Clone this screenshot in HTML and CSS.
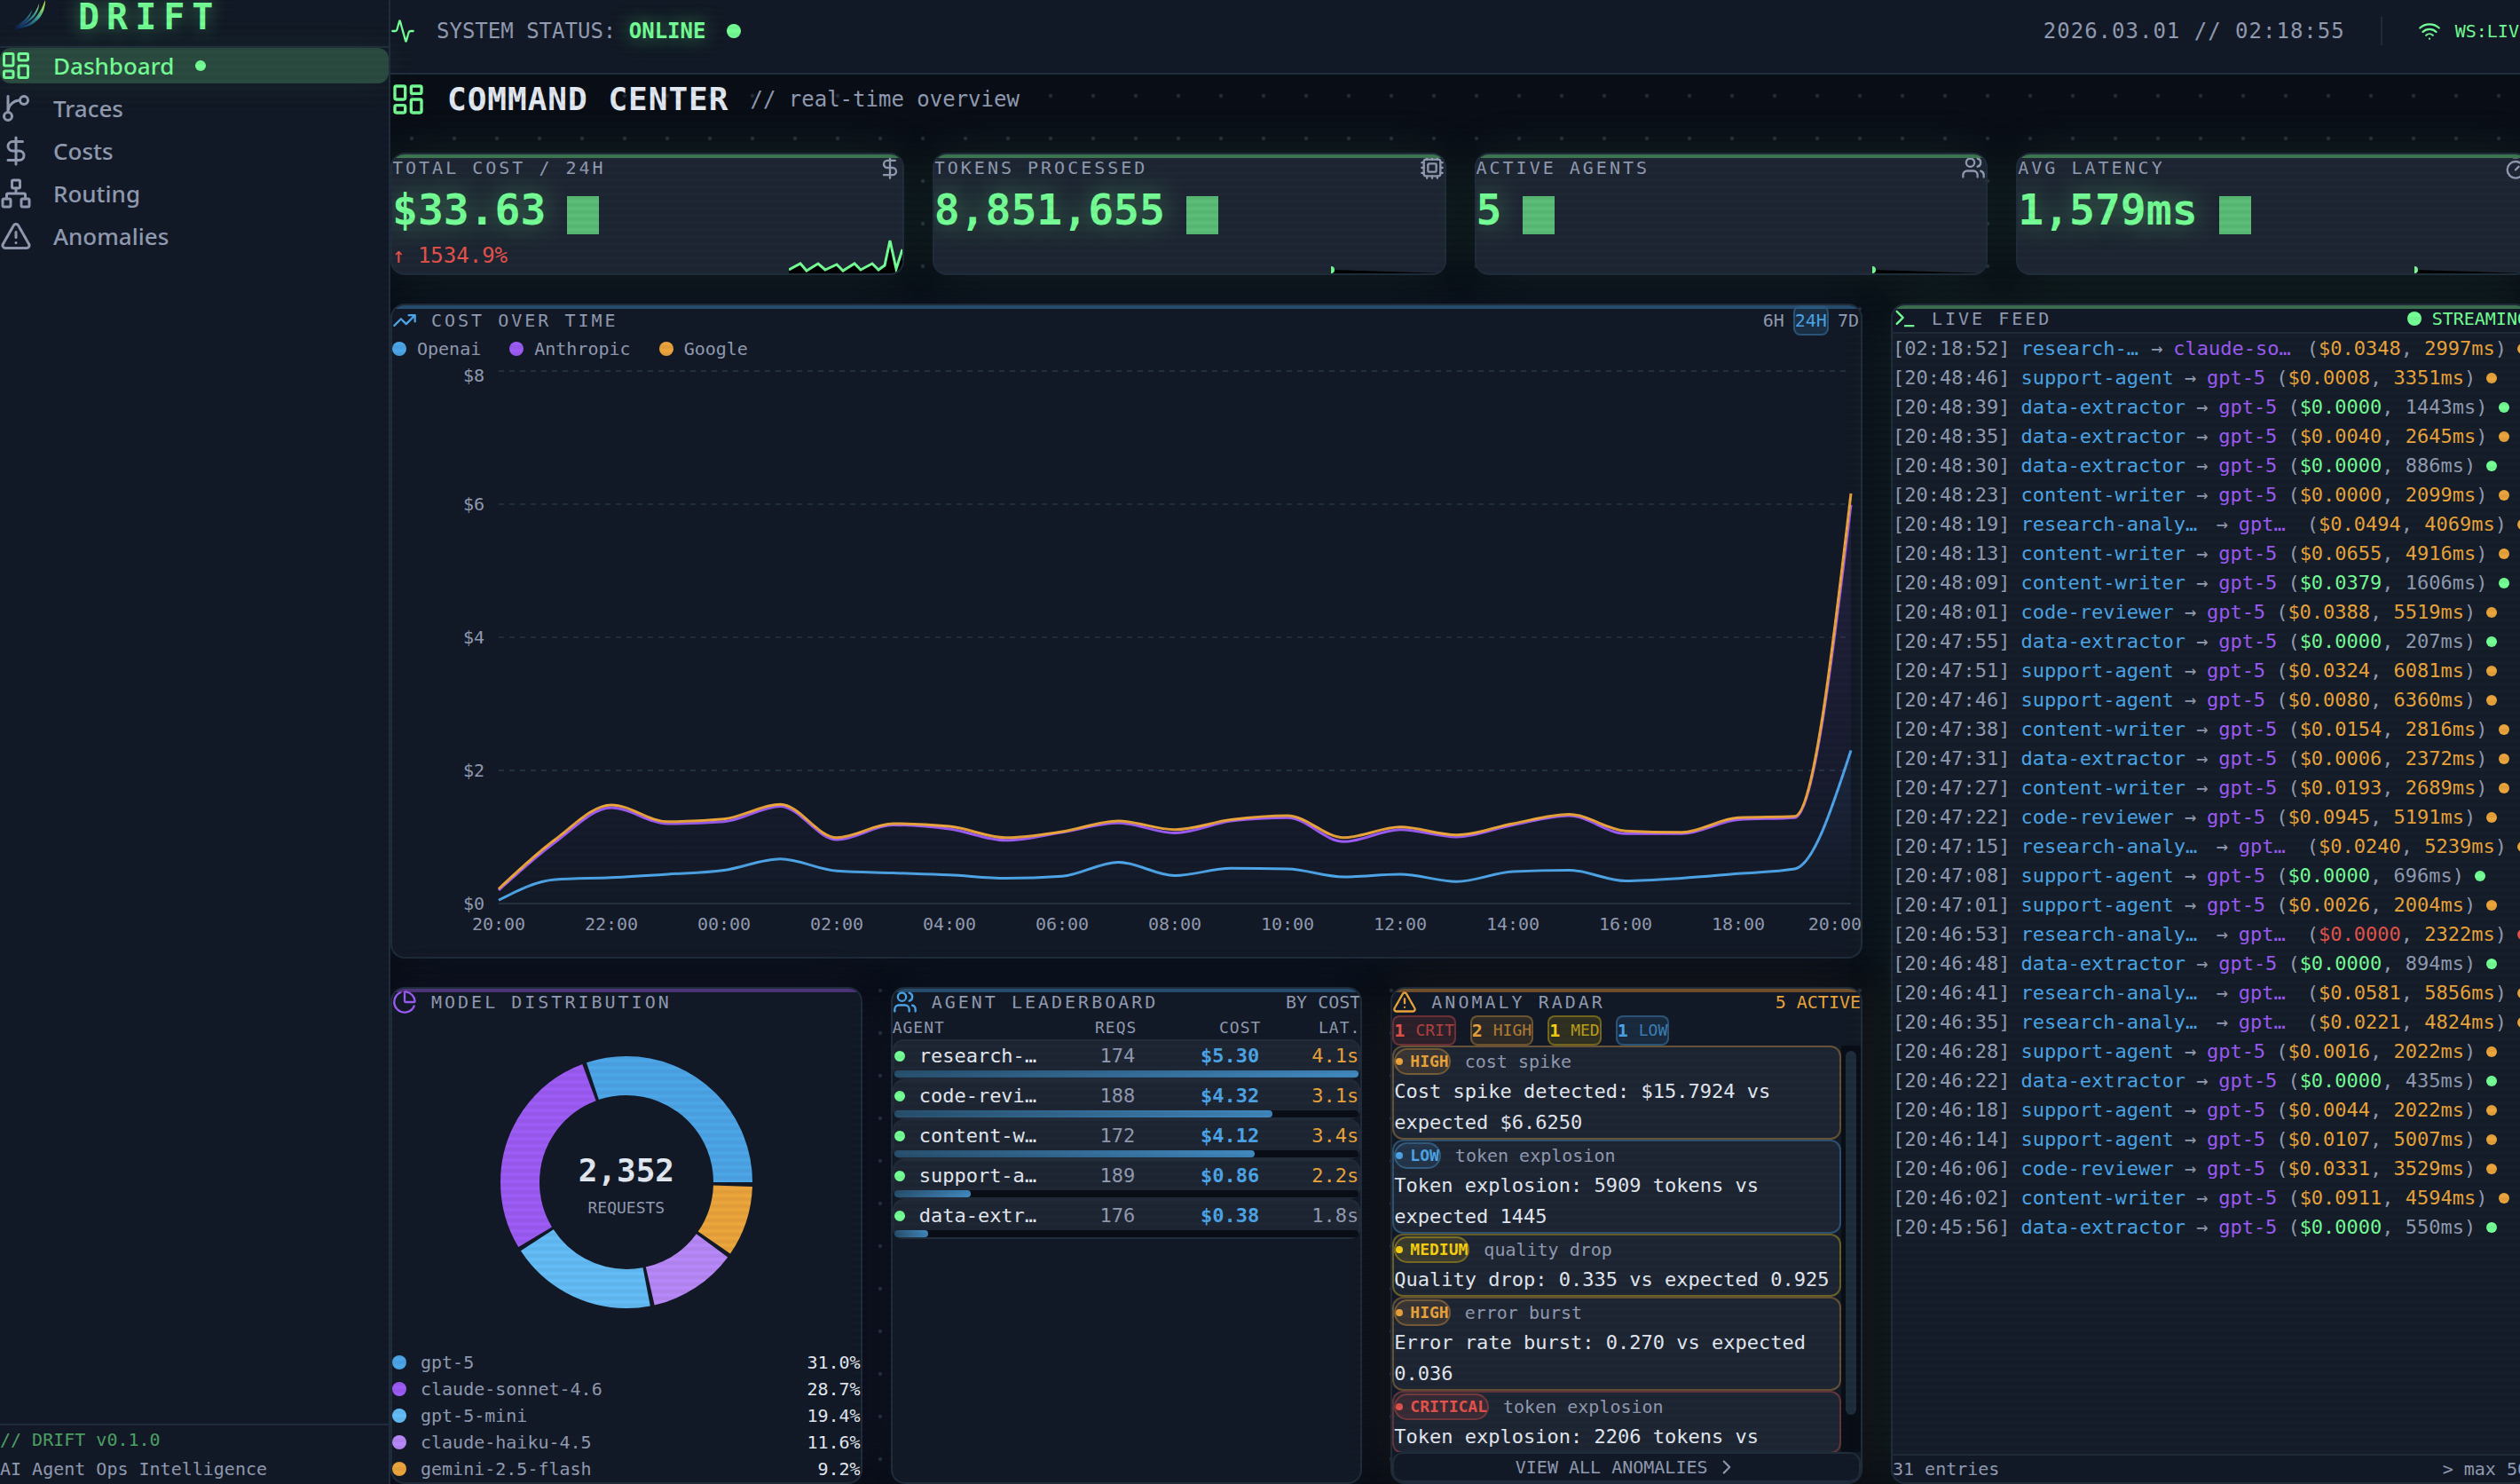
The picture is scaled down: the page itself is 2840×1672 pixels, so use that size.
FILE: index.html
```html
<!DOCTYPE html>
<html lang="en">
<head>
  <meta charset="utf-8">
  <title>DRIFT - Command Center</title>
  <link rel="stylesheet" href="styles.css">
</head>
<body>
  <!-- icon set -->
  <svg class="sprite" aria-hidden="true">
    <symbol id="i-dashboard" viewBox="0 0 24 24"><rect x="3" y="3" width="7" height="9" rx="1"/><rect x="14" y="3" width="7" height="5" rx="1"/><rect x="14" y="12" width="7" height="9" rx="1"/><rect x="3" y="16" width="7" height="5" rx="1"/></symbol>
    <symbol id="i-branch" viewBox="0 0 24 24"><path d="M15 6a9 9 0 0 0-9 9V3"/><circle cx="18" cy="6" r="3"/><circle cx="6" cy="18" r="3"/></symbol>
    <symbol id="i-dollar" viewBox="0 0 24 24"><path d="M12 2v20M17 5H9.5a3.5 3.5 0 0 0 0 7h5a3.5 3.5 0 0 1 0 7H6"/></symbol>
    <symbol id="i-network" viewBox="0 0 24 24"><rect x="16" y="16" width="6" height="6" rx="1"/><rect x="2" y="16" width="6" height="6" rx="1"/><rect x="9" y="2" width="6" height="6" rx="1"/><path d="M5 16v-3a1 1 0 0 1 1-1h12a1 1 0 0 1 1 1v3M12 12V8"/></symbol>
    <symbol id="i-alert" viewBox="0 0 24 24"><path d="m21.73 18-8-14a2 2 0 0 0-3.48 0l-8 14A2 2 0 0 0 4 21h16a2 2 0 0 0 1.73-3M12 9v4M12 17h.01"/></symbol>
    <symbol id="i-activity" viewBox="0 0 24 24"><path d="M22 12h-2.48a2 2 0 0 0-1.93 1.46l-2.35 8.36a.25.25 0 0 1-.48 0L9.24 2.18a.25.25 0 0 0-.48 0l-2.35 8.36A2 2 0 0 1 4.49 12H2"/></symbol>
    <symbol id="i-wifi" viewBox="0 0 24 24"><path d="M12 20h.01M2 8.82a15 15 0 0 1 20 0M5 12.859a10 10 0 0 1 14 0M8.5 16.429a5 5 0 0 1 7 0"/></symbol>
    <symbol id="i-cpu" viewBox="0 0 24 24"><rect x="4" y="4" width="16" height="16" rx="2"/><rect x="8" y="8" width="8" height="8" rx="1"/><path d="M12 20v2M12 2v2M17 20v2M17 2v2M7 20v2M7 2v2M2 12h2M2 17h2M2 7h2M20 12h2M20 17h2M20 7h2"/></symbol>
    <symbol id="i-users" viewBox="0 0 24 24"><path d="M16 21v-2a4 4 0 0 0-4-4H6a4 4 0 0 0-4 4v2M22 21v-2a4 4 0 0 0-3-3.87M16 3.13a4 4 0 0 1 0 7.75"/><circle cx="9" cy="7" r="4"/></symbol>
    <symbol id="i-timer" viewBox="0 0 24 24"><path d="M10 2h4M12 14l3-3"/><circle cx="12" cy="14" r="8"/></symbol>
    <symbol id="i-trend" viewBox="0 0 24 24"><path d="M16 7h6v6M22 7l-8.5 8.5-5-5L2 17"/></symbol>
    <symbol id="i-pie" viewBox="0 0 24 24"><path d="M21 12c.552 0 1.005-.449.95-.998a10 10 0 0 0-8.953-8.951c-.55-.055-.998.398-.998.95v8a1 1 0 0 0 1 1zM21.21 15.89A10 10 0 1 1 8 2.83"/></symbol>
    <symbol id="i-terminal" viewBox="0 0 24 24"><path d="M12 19h8M4 17l6-6-6-6"/></symbol>
    <symbol id="i-chevron" viewBox="0 0 24 24"><path d="m9 18 6-6-6-6"/></symbol>
  </svg>

  <div class="app">
    <aside class="sidebar">
      <div class="brand">
        <svg class="brand-logo" viewBox="0 0 64 38" aria-hidden="true">
          <defs>
            <linearGradient id="feather" gradientUnits="userSpaceOnUse" x1="14" y1="34" x2="50" y2="2">
              <stop offset="0" stop-color="#0c1640"/>
              <stop offset=".35" stop-color="#1c4a7c"/>
              <stop offset=".65" stop-color="#3fa596"/>
              <stop offset="1" stop-color="#c8f542"/>
            </linearGradient>
          </defs>
          <g fill="url(#feather)">
            <path d="M51 0C51 16 42 28 26 30C38 25 46 14 51 0Z"/>
            <path d="M44 4C44 16 34 27 18 31C32 24 40 16 44 4Z"/>
            <path d="M36 11C35 20 27 28 14 32C25 25 32 20 36 11Z"/>
            <path d="M14 35C20 27 28 30 40 24C32 33 22 30 14 35Z"/>
          </g>
        </svg>
        <span class="brand-name">DRIFT</span>
      </div>
      <nav class="nav">
        <a class="nav-item active" href="#"><svg class="icon icon-lg"><use href="#i-dashboard"/></svg><span>Dashboard</span><i class="nav-dot"></i></a>
        <a class="nav-item" href="#"><svg class="icon icon-lg"><use href="#i-branch"/></svg><span>Traces</span></a>
        <a class="nav-item" href="#"><svg class="icon icon-lg"><use href="#i-dollar"/></svg><span>Costs</span></a>
        <a class="nav-item" href="#"><svg class="icon icon-lg"><use href="#i-network"/></svg><span>Routing</span></a>
        <a class="nav-item" href="#"><svg class="icon icon-lg"><use href="#i-alert"/></svg><span>Anomalies</span></a>
      </nav>
      <div class="sidebar-footer">
        <div class="version">// DRIFT v0.1.0</div>
        <div>AI Agent Ops Intelligence</div>
      </div>
    </aside>

    <div class="main">
      <header class="topbar">
        <div class="status">
          <svg class="icon green"><use href="#i-activity"/></svg>
          <span>SYSTEM STATUS: <b class="online">ONLINE</b></span>
          <i class="dot green"></i>
        </div>
        <div class="topbar-right">
          <span class="clock">2026.03.01 // 02:18:55</span>
          <i class="divider"></i>
          <span class="ws"><svg class="icon icon-sm"><use href="#i-wifi"/></svg>WS:LIVE</span>
        </div>
      </header>

      <main class="content">
        <div class="page-title">
          <svg class="icon icon-xl green"><use href="#i-dashboard"/></svg>
          <h1>COMMAND CENTER</h1>
          <span>// real-time overview</span>
        </div>

        <section class="kpis">
          <div class="card">
            <div class="card-head"><span>TOTAL COST / 24H</span><svg class="icon"><use href="#i-dollar"/></svg></div>
            <div class="card-value"><span>$33.63</span><i class="cursor"></i></div>
            <div class="card-delta">↑ 1534.9%</div>
            <svg class="spark" viewBox="0 0 128 40">
              <path d="M0 36L13 29 20 37 33 29 41 36 54 30 61 37 74 29 81 36 94 29 101 36 108 31 114 3 121 35 128 13V40H0Z"/>
              <polyline points="0,36 13,29 20,37 33,29 41,36 54,30 61,37 74,29 81,36 94,29 101,36 108,31 114,3 121,35 128,13"/>
            </svg>
          </div>
          <div class="card">
            <div class="card-head"><span>TOKENS PROCESSED</span><svg class="icon"><use href="#i-cpu"/></svg></div>
            <div class="card-value"><span>8,851,655</span><i class="cursor"></i></div>
            <svg class="spark" viewBox="0 0 128 40"><path d="M0 36L128 40H0Z"/><circle cx="0" cy="36" r="4"/></svg>
          </div>
          <div class="card">
            <div class="card-head"><span>ACTIVE AGENTS</span><svg class="icon"><use href="#i-users"/></svg></div>
            <div class="card-value"><span>5</span><i class="cursor"></i></div>
            <svg class="spark" viewBox="0 0 128 40"><path d="M0 36L128 40H0Z"/><circle cx="0" cy="36" r="4"/></svg>
          </div>
          <div class="card">
            <div class="card-head"><span>AVG LATENCY</span><svg class="icon"><use href="#i-timer"/></svg></div>
            <div class="card-value"><span>1,579ms</span><i class="cursor"></i></div>
            <svg class="spark" viewBox="0 0 128 40"><path d="M0 36L128 40H0Z"/><circle cx="0" cy="36" r="4"/></svg>
          </div>
        </section>

        <div class="board">
          <div class="left">
            <section class="panel panel-blue chart-panel">
              <div class="panel-head">
                <svg class="icon blue"><use href="#i-trend"/></svg>
                <h2>COST OVER TIME</h2>
                <div class="ranges">
                  <button>6H</button>
                  <button class="on">24H</button>
                  <button>7D</button>
                </div>
              </div>
              <div class="legend">
                <span><i class="dot blue"></i>Openai</span>
                <span><i class="dot purple"></i>Anthropic</span>
                <span><i class="dot orange"></i>Google</span>
              </div>
              <svg class="chart" id="chart" viewBox="0 0 1655 670" preserveAspectRatio="xMinYMin meet">
                <defs>
                  <linearGradient id="fill-purple" x1="0" y1="0" x2="0" y2="1"><stop offset="0" stop-color="#9d5cf5" stop-opacity=".12"/><stop offset="1" stop-color="#9d5cf5" stop-opacity="0"/></linearGradient>
                  <linearGradient id="fill-blue" x1="0" y1="0" x2="0" y2="1"><stop offset="0" stop-color="#4da6e8" stop-opacity=".08"/><stop offset="1" stop-color="#4da6e8" stop-opacity="0"/></linearGradient>
                </defs>
              </svg>
            </section>

            <div class="trio">
              <section class="panel panel-purple">
                <div class="panel-head">
                  <svg class="icon purple"><use href="#i-pie"/></svg>
                  <h2>MODEL DISTRIBUTION</h2>
                </div>
                <div class="donut">
                  <svg viewBox="-143 -143 286 286">
                    <g fill="none" stroke-width="44" transform="scale(1,-1)">
                      <circle r="120" pathLength="360" stroke="#4da6e8" stroke-dasharray="108.5 251.5"/>
                      <circle r="120" pathLength="360" stroke="#9d5cf5" stroke-dasharray="100.5 259.5" stroke-dashoffset="-110.5"/>
                      <circle r="120" pathLength="360" stroke="#64bdf7" stroke-dasharray="67.9 292.1" stroke-dashoffset="-213"/>
                      <circle r="120" pathLength="360" stroke="#b888f8" stroke-dasharray="40.6 319.4" stroke-dashoffset="-282.9"/>
                      <circle r="120" pathLength="360" stroke="#eba53c" stroke-dasharray="32.5 327.5" stroke-dashoffset="-325.5"/>
                    </g>
                  </svg>
                  <div class="donut-label"><strong>2,352</strong><span>REQUESTS</span></div>
                </div>
                <ul class="models">
                  <li><i class="dot blue"></i>gpt-5<b>31.0%</b></li>
                  <li><i class="dot purple"></i>claude-sonnet-4.6<b>28.7%</b></li>
                  <li><i class="dot sky"></i>gpt-5-mini<b>19.4%</b></li>
                  <li><i class="dot lilac"></i>claude-haiku-4.5<b>11.6%</b></li>
                  <li><i class="dot orange"></i>gemini-2.5-flash<b>9.2%</b></li>
                </ul>
              </section>

              <section class="panel panel-blue">
                <div class="panel-head">
                  <svg class="icon blue"><use href="#i-users"/></svg>
                  <h2>AGENT LEADERBOARD</h2>
                  <span class="head-note">BY COST</span>
                </div>
                <table class="agents">
                  <thead><tr><th>AGENT</th><th>REQS</th><th>COST</th><th>LAT.</th></tr></thead>
                  <tbody>
                    <tr><td><i class="dot green"></i><span>research-analyst</span></td><td>174</td><td>$5.30</td><td class="warn">4.1s</td><td class="bar"><i style="width:100%"></i></td></tr>
                    <tr><td><i class="dot green"></i><span>code-reviewer</span></td><td>188</td><td>$4.32</td><td class="warn">3.1s</td><td class="bar"><i style="width:81.4%"></i></td></tr>
                    <tr><td><i class="dot green"></i><span>content-writer</span></td><td>172</td><td>$4.12</td><td class="warn">3.4s</td><td class="bar"><i style="width:77.6%"></i></td></tr>
                    <tr><td><i class="dot green"></i><span>support-agent</span></td><td>189</td><td>$0.86</td><td class="warn">2.2s</td><td class="bar"><i style="width:16.4%"></i></td></tr>
                    <tr><td><i class="dot green"></i><span>data-extractor</span></td><td>176</td><td>$0.38</td><td>1.8s</td><td class="bar"><i style="width:7.3%"></i></td></tr>
                  </tbody>
                </table>
              </section>

              <section class="panel panel-orange">
                <div class="panel-head">
                  <svg class="icon orange"><use href="#i-alert"/></svg>
                  <h2>ANOMALY RADAR</h2>
                  <span class="head-note orange">5 ACTIVE</span>
                </div>
                <div class="counts">
                  <span class="sev red"><b>1</b><em>CRIT</em></span>
                  <span class="sev orange"><b>2</b><em>HIGH</em></span>
                  <span class="sev yellow"><b>1</b><em>MED</em></span>
                  <span class="sev blue"><b>1</b><em>LOW</em></span>
                </div>
                <div class="anomalies">
                  <div class="anomaly-list">
                    <article class="anomaly orange"><div><span class="pill"><i></i>HIGH</span><small>cost spike</small></div><p>Cost spike detected: $15.7924 vs expected $6.6250</p></article>
                    <article class="anomaly blue"><div><span class="pill"><i></i>LOW</span><small>token explosion</small></div><p>Token explosion: 5909 tokens vs expected 1445</p></article>
                    <article class="anomaly yellow"><div><span class="pill"><i></i>MEDIUM</span><small>quality drop</small></div><p>Quality drop: 0.335 vs expected 0.925</p></article>
                    <article class="anomaly orange"><div><span class="pill"><i></i>HIGH</span><small>error burst</small></div><p>Error rate burst: 0.270 vs expected 0.036</p></article>
                    <article class="anomaly red"><div><span class="pill"><i></i>CRITICAL</span><small>token explosion</small></div><p>Token explosion: 2206 tokens vs</p></article>
                  </div>
                  <div class="scroll"><i></i></div>
                </div>
                <button class="view-all">VIEW ALL ANOMALIES <svg class="icon icon-sm"><use href="#i-chevron"/></svg></button>
              </section>
            </div>
          </div>

          <section class="panel panel-green feed">
            <div class="panel-head feed-head">
              <svg class="icon green"><use href="#i-terminal"/></svg>
              <h2>LIVE FEED</h2>
              <span class="head-note green"><i class="dot"></i>STREAMING</span>
            </div>
            <div class="feed-rows" id="feed"></div>
            <div class="feed-foot"><span>31 entries</span><span>&gt; max 50</span></div>
          </section>
        </div>
      </main>
    </div>
  </div>
  <script src="script.js"></script>
</body>
</html>
```

FILE: styles.css
```css
:root {
  --bg: #0a0e17;
  --panel: #131a27;
  --card: #1f2634;
  --line: #202d3c;
  --text: #e4eaf2;
  --muted: #929cb2;
  --green: #75ff96;
  --blue: #4da6e8;
  --purple: #9d5cf5;
  --orange: #eba53c;
  --red: #e5544c;
  --yellow: #f7d012;
}

* {
  box-sizing: border-box;
}

body {
  margin: 0;
  overflow: hidden;
  background: var(--bg);
  color: var(--muted);
  font: 20px/30px "DejaVu Sans Mono", monospace;
}

/* scanlines */
body::after {
  content: "";
  position: fixed;
  inset: 0;
  z-index: 2;
  pointer-events: none;
  background: repeating-linear-gradient(0deg, rgba(0, 0, 0, 0.05) 0, rgba(0, 0, 0, 0.05) 2px, transparent 4px, transparent 6px, rgba(0, 0, 0, 0.05) 8px);
}

h1, h2, p, ul {
  margin: 0;
  padding: 0;
}

button {
  font: inherit;
  color: inherit;
  background: none;
  padding: 0;
  cursor: pointer;
}

.sprite {
  position: absolute;
  width: 0;
  height: 0;
}

.icon {
  width: 28px;
  height: 28px;
  flex: none;
  fill: none;
  stroke: currentColor;
  stroke-width: 2;
  stroke-linecap: round;
  stroke-linejoin: round;
}
.icon-sm { width: 26px; height: 26px; }
.icon-lg { width: 36px; height: 36px; }
.icon-xl { width: 40px; height: 40px; }

.green { color: var(--green); }
.blue { color: var(--blue); }
.purple { color: var(--purple); }
.orange { color: var(--orange); }
.red { color: var(--red); }
.yellow { color: var(--yellow); }
.sky { color: #64bdf7; }
.lilac { color: #b888f8; }

.dot {
  flex: none;
  width: 16px;
  height: 16px;
  border-radius: 50%;
  background: currentColor;
}

.app {
  display: flex;
  height: 100vh;
}

/* ---------- sidebar ---------- */
.sidebar {
  position: relative;
  z-index: 1;
  display: flex;
  flex-direction: column;
  flex: none;
  width: 440px;
  background: var(--panel);
  border-right: 2px solid var(--line);
}

.brand {
  display: flex;
  gap: 24px;
  padding-bottom: 14px;
  border-bottom: 2px solid var(--line);
}
.brand-logo {
  width: 64px;
  height: 38px;
}
.brand-name {
  color: var(--green);
  font-size: 40px;
  font-weight: bold;
  line-height: 38px;
  letter-spacing: 8px;
  text-shadow: 0 0 20px rgba(117, 255, 150, 0.5);
}

.nav {
  display: flex;
  flex-direction: column;
  gap: 8px;
  flex: 1;
}
.nav-item {
  display: flex;
  align-items: center;
  gap: 24px;
  height: 40px;
  border-radius: 12px;
  color: var(--muted);
  font: 500 26px/40px "Noto Sans", sans-serif;
  text-decoration: none;
}
.nav-item.active {
  color: var(--green);
  background: #2b4b40;
  box-shadow: 0 0 40px rgba(117, 255, 150, 0.06);
}
.nav-dot {
  width: 12px;
  height: 12px;
  border-radius: 50%;
  background: currentColor;
}

.sidebar-footer {
  border-top: 2px solid var(--line);
  line-height: 33px;
}
.version {
  color: #4fa266;
}

/* ---------- top bar ---------- */
.main {
  display: flex;
  flex-direction: column;
  flex: 1;
  min-width: 0;
  /* the board runs a little past the window */
  margin-right: -11px;
}

.topbar {
  display: flex;
  justify-content: space-between;
  height: 84px;
  padding-bottom: 12px;
  background: var(--panel);
  border-bottom: 2px solid var(--line);
  font-size: 24px;
}
.status, .topbar-right {
  display: flex;
  align-items: center;
  gap: 24px;
}
.online {
  color: var(--green);
  text-shadow: 0 0 20px rgba(117, 255, 150, 0.5);
}
.topbar-right {
  gap: 40px;
}
.clock {
  letter-spacing: 1px;
}
.divider {
  width: 2px;
  height: 32px;
  background: var(--line);
}
.ws {
  display: flex;
  align-items: center;
  gap: 16px;
  color: var(--green);
  font-size: 20px;
}

/* ---------- content ---------- */
.content {
  display: flex;
  flex-direction: column;
  gap: 32px;
  flex: 1;
  min-height: 0;
  background: radial-gradient(circle, #22303e 0, #22303e 1px, transparent 3px) 0 0 / 48px 48px;
}

.page-title {
  display: flex;
  align-items: center;
  gap: 24px;
  height: 56px;
  font-size: 24px;
}
.page-title h1 {
  color: var(--text);
  font-size: 36px;
  letter-spacing: 1px;
}

.kpis {
  display: grid;
  grid-template-columns: repeat(4, 1fr);
  gap: 32px;
}

.card, .panel {
  position: relative;
  overflow: hidden;
  border: 2px solid var(--line);
  border-radius: 16px;
}
.card::before, .panel::before {
  content: "";
  position: absolute;
  top: 0;
  left: 0;
  right: 0;
  height: 4px;
  background: var(--accent);
}

.card {
  --accent: #3f7a53;
  background: var(--card);
  box-shadow: 0 0 60px rgba(117, 255, 150, 0.09);
}
.card-head {
  display: flex;
  align-items: center;
  justify-content: space-between;
  height: 30px;
  letter-spacing: 3px;
}
.card-value {
  color: var(--green);
  font-size: 48px;
  font-weight: bold;
  line-height: 64px;
  text-shadow: 0 0 30px rgba(117, 255, 150, 0.5);
}
.cursor {
  display: inline-block;
  width: 36px;
  height: 43px;
  margin-left: 24px;
  vertical-align: -11px;
  background: var(--green);
  opacity: 0.7;
}
.card-delta {
  color: var(--red);
  font-size: 24px;
  line-height: 40px;
}
.spark {
  position: absolute;
  right: 0;
  bottom: 0;
  width: 128px;
  height: 40px;
}
.spark polyline {
  fill: none;
  stroke: var(--green);
  stroke-width: 3;
}
.spark circle {
  fill: var(--green);
}

/* ---------- board ---------- */
.board {
  display: grid;
  grid-template-columns: 1fr 720px;
  gap: 32px;
  flex: 1;
  min-height: 0;
}
.left {
  display: flex;
  flex-direction: column;
  gap: 32px;
  min-width: 0;
  min-height: 0;
}

.panel {
  display: flex;
  flex-direction: column;
  min-width: 0;
  background: var(--panel);
}
.panel-blue { --accent: #264d6e; box-shadow: 0 0 60px rgba(77, 166, 232, 0.06); }
.panel-purple { --accent: #4c3478; box-shadow: 0 0 60px rgba(157, 92, 245, 0.07); }
.panel-orange { --accent: #704f2b; box-shadow: 0 0 60px rgba(235, 165, 60, 0.08); }
.panel-green { --accent: #3a6e4e; box-shadow: 0 0 60px rgba(117, 255, 150, 0.09); }

.panel-head {
  position: relative;
  display: flex;
  align-items: center;
  gap: 16px;
  height: 30px;
  flex: none;
}
.panel-head h2 {
  font-size: 20px;
  font-weight: normal;
  letter-spacing: 3px;
}
.head-note {
  display: flex;
  align-items: center;
  gap: 12px;
  margin-left: auto;
}

.chart-panel {
  flex: 1;
  min-height: 0;
}
.chart-panel .panel-head {
  height: 34px;
}
.ranges {
  display: flex;
  gap: 8px;
  margin-left: auto;
}
.ranges button {
  border: 2px solid transparent;
  border-radius: 8px;
}
.ranges .on {
  color: var(--blue);
  border-color: #2b557a;
  background: rgba(77, 166, 232, 0.16);
}
.legend {
  display: flex;
  gap: 32px;
}
.legend span {
  display: flex;
  align-items: center;
  gap: 12px;
}
.chart {
  flex: 1 1 0;
  width: 100%;
  min-height: 0;
}
.chart text {
  fill: var(--muted);
  font-size: 20px;
}
.grid-line {
  stroke: #232f3d;
  stroke-width: 2;
  stroke-dasharray: 6 6;
}
.axis-line {
  stroke: #232f3d;
  stroke-width: 2;
}
.series {
  fill: none;
  stroke-width: 3;
}

.trio {
  display: grid;
  grid-template-columns: repeat(3, minmax(0, 1fr));
  gap: 32px;
}

/* model distribution */
.donut {
  display: grid;
  place-items: center;
  height: 376px;
}
.donut svg {
  grid-area: 1 / 1;
  width: 286px;
  height: 286px;
}
.donut-label {
  grid-area: 1 / 1;
  display: flex;
  flex-direction: column;
  align-items: center;
  padding-top: 4px;
  font-size: 18px;
}
.donut-label strong {
  color: var(--text);
  font-size: 36px;
  line-height: 54px;
}
.models {
  list-style: none;
}
.models li {
  display: flex;
  align-items: center;
  gap: 16px;
}
.models b {
  margin-left: auto;
  color: var(--text);
  font-weight: 500;
}

/* leaderboard, every row is its own grid so the bar can sit under the cells */
.agents, .agents thead, .agents tbody {
  display: block;
}
.agents tr {
  display: grid;
  grid-template-columns: 1fr 104px 140px 112px;
}
.agents th {
  padding: 0;
  font-size: 18px;
  font-weight: normal;
  line-height: 27px;
  letter-spacing: 1px;
  text-align: right;
}
.agents th:first-child {
  text-align: left;
}
.agents tbody tr {
  border: 2px solid #222c3a;
  border-radius: 12px;
  background: var(--card);
  font-size: 22px;
  line-height: 33px;
}
.agents td {
  padding: 0;
  text-align: right;
}
.agents td:first-child {
  display: flex;
  align-items: center;
  gap: 16px;
  min-width: 0;
  padding-right: 4px;
  color: var(--text);
}
.agents td:first-child span {
  overflow: hidden;
  text-overflow: ellipsis;
  white-space: nowrap;
}
.agents .dot {
  width: 12px;
  height: 12px;
}
.agents td:nth-child(3) {
  color: var(--blue);
  font-weight: bold;
}
.agents .warn {
  color: var(--orange);
}
.agents .bar {
  grid-column: 1 / -1;
  height: 8px;
  border-radius: 4px;
  background: var(--bg);
}
.bar i {
  display: block;
  height: 8px;
  border-radius: 4px;
  background: linear-gradient(90deg, #28506e, #4189c0);
}

/* anomalies */
.counts {
  display: flex;
  gap: 16px;
}
.sev {
  display: flex;
  gap: 12px;
  border: 2px solid color-mix(in srgb, currentColor 35%, transparent);
  border-radius: 8px;
  background: color-mix(in srgb, currentColor 13%, transparent);
}
.sev em {
  font-size: 18px;
  font-style: normal;
  opacity: 0.7;
}
.anomalies {
  display: flex;
  flex: 1 1 0;
  min-height: 0;
}
.anomaly-list {
  flex: 1;
  min-width: 0;
  overflow: hidden;
}
.scroll {
  width: 22px;
  padding: 6px 5px;
  background: var(--bg);
}
.scroll i {
  display: block;
  height: 92%;
  border-radius: 6px;
  background: #202d3c;
}
.anomaly {
  border: 2px solid color-mix(in srgb, currentColor 35%, transparent);
  border-radius: 12px;
  background: var(--card);
}
.anomaly div {
  display: flex;
  align-items: center;
  gap: 16px;
  height: 32px;
}
.pill {
  display: flex;
  align-items: center;
  gap: 8px;
  border: 2px solid color-mix(in srgb, currentColor 35%, transparent);
  border-radius: 15px;
  background: color-mix(in srgb, currentColor 13%, transparent);
  font-size: 18px;
  font-weight: bold;
  line-height: 26px;
}
.pill i {
  width: 8px;
  height: 8px;
  border-radius: 50%;
  background: currentColor;
}
.anomaly small {
  color: var(--muted);
  font-size: 20px;
}
.anomaly p {
  color: var(--text);
  font-size: 22px;
  line-height: 35px;
}
.view-all {
  display: flex;
  align-items: center;
  justify-content: center;
  gap: 8px;
  height: 34px;
  border: 2px solid var(--line);
  border-radius: 12px;
}

/* live feed */
.feed-head {
  height: 32px;
  border-bottom: 2px solid var(--line);
}
.feed-rows {
  flex: 1 1 0;
  min-height: 0;
  overflow: hidden;
  background: #151e2a;
}
.feed-row {
  display: flex;
  align-items: center;
  gap: 12px;
  font-size: 22px;
  line-height: 33px;
  white-space: nowrap;
}
.feed-row > * {
  flex: none;
}
.feed-row .name {
  flex: 0 1 auto;
  min-width: 0;
  overflow: hidden;
  text-overflow: ellipsis;
}
/* the agent keeps a bit more room than the model */
.feed-row .agent {
  flex-shrink: 0.95;
}
.feed-row .dot {
  width: 12px;
  height: 12px;
}
.feed-foot {
  display: flex;
  justify-content: space-between;
  border-top: 2px solid var(--line);
}
```

FILE: script.js
```js
// [time, agent, model, cost, latency, state color when it is not set by the latency]
const feed = [
  ["02:18:52", "research-analyst", "claude-sonnet-4.6", "0.0348", 2997],
  ["20:48:46", "support-agent", "gpt-5", "0.0008", 3351],
  ["20:48:39", "data-extractor", "gpt-5", "0.0000", 1443],
  ["20:48:35", "data-extractor", "gpt-5", "0.0040", 2645],
  ["20:48:30", "data-extractor", "gpt-5", "0.0000", 886],
  ["20:48:23", "content-writer", "gpt-5", "0.0000", 2099],
  ["20:48:19", "research-analyst", "gpt-5", "0.0494", 4069],
  ["20:48:13", "content-writer", "gpt-5", "0.0655", 4916],
  ["20:48:09", "content-writer", "gpt-5", "0.0379", 1606],
  ["20:48:01", "code-reviewer", "gpt-5", "0.0388", 5519],
  ["20:47:55", "data-extractor", "gpt-5", "0.0000", 207],
  ["20:47:51", "support-agent", "gpt-5", "0.0324", 6081],
  ["20:47:46", "support-agent", "gpt-5", "0.0080", 6360],
  ["20:47:38", "content-writer", "gpt-5", "0.0154", 2816],
  ["20:47:31", "data-extractor", "gpt-5", "0.0006", 2372],
  ["20:47:27", "content-writer", "gpt-5", "0.0193", 2689],
  ["20:47:22", "code-reviewer", "gpt-5", "0.0945", 5191],
  ["20:47:15", "research-analyst", "gpt-5", "0.0240", 5239],
  ["20:47:08", "support-agent", "gpt-5", "0.0000", 696],
  ["20:47:01", "support-agent", "gpt-5", "0.0026", 2004],
  ["20:46:53", "research-analyst", "gpt-5", "0.0000", 2322, "red"],
  ["20:46:48", "data-extractor", "gpt-5", "0.0000", 894],
  ["20:46:41", "research-analyst", "gpt-5", "0.0581", 5856],
  ["20:46:35", "research-analyst", "gpt-5", "0.0221", 4824],
  ["20:46:28", "support-agent", "gpt-5", "0.0016", 2022],
  ["20:46:22", "data-extractor", "gpt-5", "0.0000", 435],
  ["20:46:18", "support-agent", "gpt-5", "0.0044", 2022],
  ["20:46:14", "support-agent", "gpt-5", "0.0107", 5007],
  ["20:46:06", "code-reviewer", "gpt-5", "0.0331", 3529],
  ["20:46:02", "content-writer", "gpt-5", "0.0911", 4594],
  ["20:45:56", "data-extractor", "gpt-5", "0.0000", 550]
];

document.getElementById("feed").innerHTML = feed.map(([time, agent, model, cost, ms, state]) => {
  const slow = ms >= 2000;
  const color = state || (slow ? "orange" : "green");
  return `<div class="feed-row"><span>[${time}]</span><span class="name agent blue">${agent}</span><span>→</span>` +
    `<span class="name purple">${model}</span>` +
    `<span>(<span class="${color}">$${cost}</span>, <span class="${slow ? "orange" : ""}">${ms}ms</span>)</span>` +
    `<i class="dot ${color}"></i></div>`;
}).join("");

// cost chart
const series = [
  { color: "#4da6e8", fill: "url(#fill-blue)", data: [.05, .36, .39, .44, .5, .67, .49, .46, .43, .38, .41, .62, .42, .53, .52, .4, .44, .33, .48, .5, .34, .38, .45, .52, 2.3] },
  { color: "#9d5cf5", fill: "url(#fill-purple)", data: [.2, .92, 1.44, 1.2, 1.23, 1.46, .96, 1.18, 1.12, .95, 1.07, 1.21, 1.06, 1.24, 1.29, .93, 1.11, 1, 1.18, 1.32, 1.05, 1.05, 1.26, 1.29, 5.99] },
  { color: "#eba53c", data: [.22, .96, 1.48, 1.23, 1.27, 1.49, .99, 1.2, 1.16, .99, 1.08, 1.24, 1.11, 1.26, 1.32, .99, 1.15, 1.03, 1.2, 1.34, 1.09, 1.07, 1.29, 1.31, 6.16] }
];
const left = 120, right = 1644, bottom = 610, unit = 75;
const step = (right - left) / 24;

// monotone cubic through the hourly points
function curve(data) {
  const p = data.map((v, i) => [left + i * step, bottom - v * unit]);
  const s = p.slice(1).map((b, i) => (b[1] - p[i][1]) / step);
  const m = p.map((_, i) => {
    if (i === 0 || i === p.length - 1) return null;
    const a = s[i - 1], b = s[i];
    return (Math.sign(a) + Math.sign(b)) * Math.min(Math.abs(a), Math.abs(b), Math.abs(a + b) / 4) || 0;
  });
  m[0] = (3 * s[0] - m[1]) / 2;
  m[24] = (3 * s[23] - m[23]) / 2;
  let d = `M${p[0]}`;
  for (let i = 1; i < p.length; i++) {
    const [x0, y0] = p[i - 1], [x1, y1] = p[i];
    d += `C${x0 + step / 3},${y0 + m[i - 1] * step / 3} ${x1 - step / 3},${y1 - m[i] * step / 3} ${x1},${y1}`;
  }
  return d;
}

let out = "";
for (let v = 0; v <= 8; v += 2) {
  const y = bottom - v * unit;
  out += `<line class="${v ? "grid-line" : "axis-line"}" x1="${left}" x2="${right}" y1="${y}" y2="${y}"/>`;
  out += `<text x="104" y="${v === 8 ? y + 12 : y + 7}" text-anchor="end">$${v}</text>`;
}
for (let h = 0; h <= 24; h += 2) {
  const label = String((20 + h) % 24).padStart(2, "0") + ":00";
  out += h === 24
    ? `<text x="1656" y="640" text-anchor="end">${label}</text>`
    : `<text x="${left + h * step}" y="640" text-anchor="middle">${label}</text>`;
}
for (const s of series) {
  const d = curve(s.data);
  if (s.fill) out += `<path d="${d}V${bottom}H${left}Z" fill="${s.fill}"/>`;
  out += `<path class="series" d="${d}" stroke="${s.color}"/>`;
}
document.getElementById("chart").innerHTML += out;
```
